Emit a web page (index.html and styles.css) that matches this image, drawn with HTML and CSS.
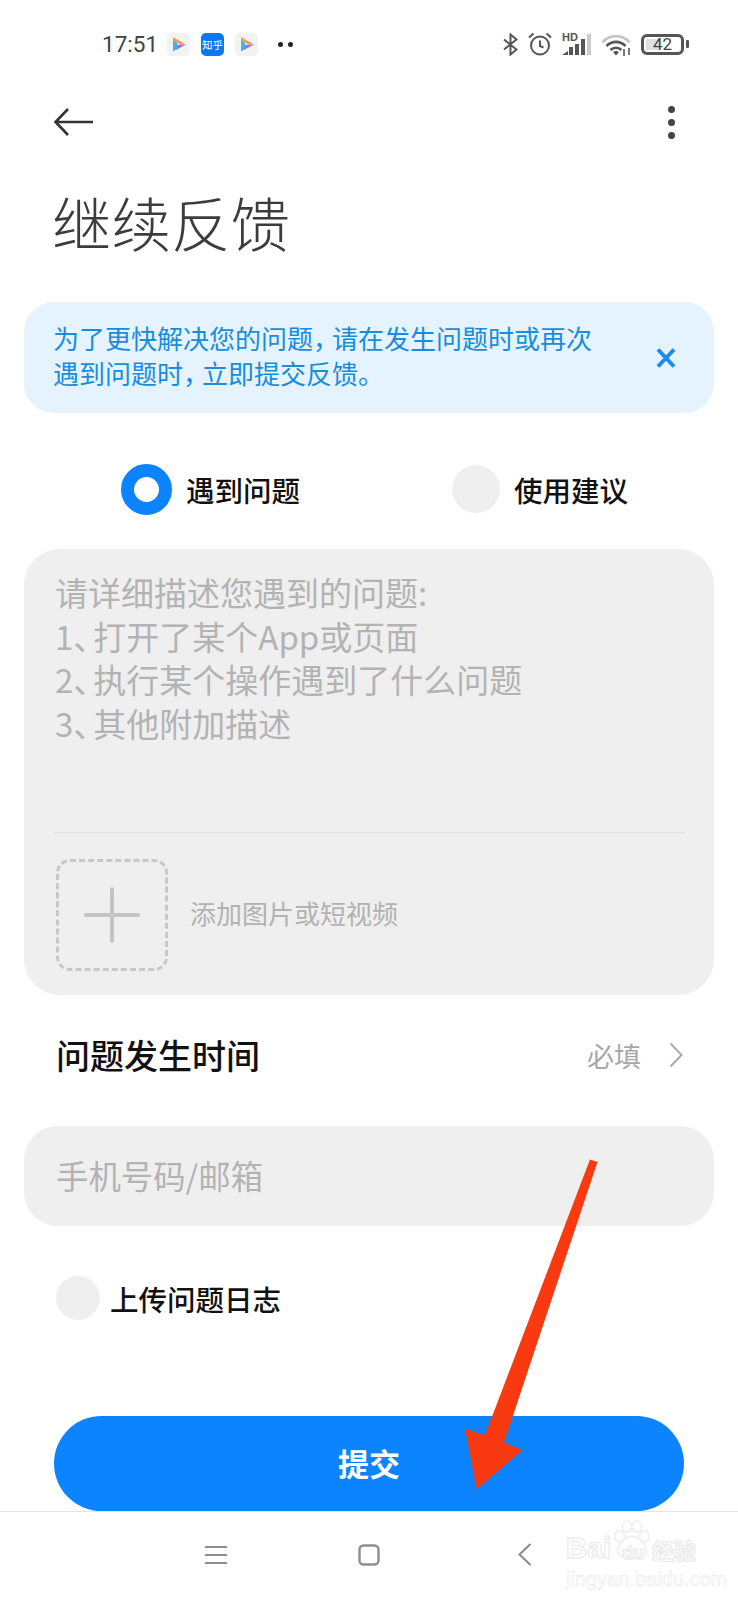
FILE: index.html
```html
<!DOCTYPE html>
<html lang="zh">
<head>
<meta charset="utf-8">
<title>继续反馈</title>
<link rel="stylesheet" href="styles.css">
</head>
<body>

<div id="page">
  <div class="status">
    <span class="time">17:51</span>
    <svg class="app" width="23" height="23" viewBox="0 0 23 23">
      <rect width="23" height="23" rx="5" fill="#f3f3f3"/>
      <path d="M6 4L19 11.5L13 11.5L6 7Z" fill="#f0a040"/>
      <path d="M19 11.5L9 17L10 12Z" fill="#a56be8"/>
      <path d="M6 7L10 9.5L10 16L6 18.5Z" fill="#3fb4ea"/>
    </svg>
    <span class="zhihu">知乎</span>
    <svg class="app" width="23" height="23" viewBox="0 0 23 23">
      <rect width="23" height="23" rx="5" fill="#f3f3f3"/>
      <path d="M6 4L19 11.5L13 11.5L6 7Z" fill="#f0a040"/>
      <path d="M19 11.5L9 17L10 12Z" fill="#a56be8"/>
      <path d="M6 7L10 9.5L10 16L6 18.5Z" fill="#3fb4ea"/>
    </svg>
    <span class="dots"><i></i><i></i></span>

    <span class="status-right">
      <svg width="15" height="23" viewBox="0 0 15 23" fill="none" stroke="#555" stroke-width="2">
        <path d="M1 6.5L13.5 16.5L7.5 21.5V1.5L13.5 6.5L1 16.5"/>
      </svg>
      <svg width="24" height="24" viewBox="0 0 24 24" fill="none" stroke="#555" stroke-width="2">
        <circle cx="12" cy="13.5" r="9"/>
        <path d="M12 8.5V14L15.5 15.5M1 5.5L5.5 1.5M23 5.5L18.5 1.5"/>
      </svg>
      <span class="signal">
        <b>HD</b>
        <svg width="29" height="21" viewBox="0 0 29 21">
          <path d="M0 21L6 17V21Z" fill="#555"/>
          <rect x="7" y="13" width="4" height="8" fill="#555"/>
          <rect x="13" y="10" width="4" height="11" fill="#555"/>
          <rect x="19" y="5" width="4" height="16" fill="#555"/>
          <rect x="25" y="0" width="4" height="21" fill="#ccc"/>
        </svg>
      </span>
      <svg width="30" height="23" viewBox="0 0 30 23" fill="none">
        <path d="M1.5 9.5C8.5 1 21.5 1 28.5 9.5" stroke="#c4c4c4" stroke-width="2.6"/>
        <path d="M5.5 13C11 7.5 19 7.5 24.5 13" stroke="#555" stroke-width="2.6"/>
        <path d="M9.5 17C12.5 14 17.5 14 20.5 17" stroke="#555" stroke-width="2.6"/>
        <path d="M12 19L15 22.5L18 19C16 17.8 14 17.8 12 19Z" fill="#555"/>
        <path d="M23 16V23M28 15V22" stroke="#555" stroke-width="1.6"/>
      </svg>
      <span class="battery"><span class="battery-fill"></span><span class="battery-num">42</span></span>
    </span>
  </div>

  <div class="topbar">
    <svg width="42" height="30" viewBox="0 0 42 30" fill="none" stroke="#333" stroke-width="2.6">
      <path d="M15 2L2.5 15L15 28M2.5 15H40"/>
    </svg>
    <span class="more"><i></i><i></i><i></i></span>
  </div>

  <h1 class="title">继续反馈</h1>

  <div class="notice">
    <p class="notice-text">为了更快解决您的问题<span class="comma">，</span>请在发生问题时或再次<br>遇到问题时<span class="comma">，</span>立即提交反馈。</p>
    <svg width="20" height="20" viewBox="0 0 20 20" fill="none" stroke="#1a8cf0" stroke-width="4">
      <path d="M2 1.5L18 18.5M18 1.5L2 18.5"/>
    </svg>
  </div>

  <div class="types">
    <span class="type type-first"><span class="radio radio-on"></span>遇到问题</span>
    <span class="type"><span class="radio"></span>使用建议</span>
  </div>

  <div class="panel">
    <p class="placeholder">请详细描述您遇到的问题:<br>1<span class="dun">、</span>打开了某个App或页面<br>2<span class="dun">、</span>执行某个操作遇到了什么问题<br>3<span class="dun">、</span>其他附加描述</p>
    <div class="divider"></div>
    <div class="attach">
      <span class="add-box">
        <svg width="56" height="56" viewBox="0 0 56 56" stroke="#c4c4c4" stroke-width="4" stroke-linecap="round">
          <path d="M28 2V54M2 28H54"/>
        </svg>
      </span>
      <span class="attach-text">添加图片或短视频</span>
    </div>
  </div>

  <div class="time-row">
    <span class="time-label">问题发生时间</span>
    <span class="required">必填</span>
    <svg width="14" height="26" viewBox="0 0 14 26" fill="none" stroke="#aaa" stroke-width="2">
      <path d="M1.5 1.5L12.5 13L1.5 24.5"/>
    </svg>
  </div>

  <div class="contact">手机号码/邮箱</div>

  <div class="log-row"><span class="radio radio-small"></span>上传问题日志</div>

  <div class="submit">提交</div>

  <div class="navbar">
    <svg width="22" height="20" viewBox="0 0 22 20" stroke="#8e8e8e" stroke-width="2">
      <path d="M0 2H22M0 10H22M0 18H22"/>
    </svg>
    <svg width="22" height="22" viewBox="0 0 22 22" fill="none" stroke="#8e8e8e" stroke-width="2.4">
      <rect x="1.5" y="1.5" width="19" height="19" rx="4"/>
    </svg>
    <svg class="nav-back" width="14" height="23" viewBox="0 0 14 23" fill="none" stroke="#8e8e8e" stroke-width="2.2">
      <path d="M12.5 1L1.5 11.5L12.5 22"/>
    </svg>
  </div>

  <!-- marks that lie over the page -->
  <svg class="red-arrow" width="738" height="1600" viewBox="0 0 738 1600">
    <path d="M590 1159.5L597.5 1162L504 1442.7L522.7 1450L476.7 1489.5L465 1428.7L485 1435Z" fill="#f93a10"/>
  </svg>

  <div class="watermark">
    <svg class="paw" width="40" height="42" viewBox="0 0 42 42" fill="none" stroke="#ececec" stroke-width="1.4">
      <ellipse cx="8" cy="17" rx="5" ry="6"/>
      <ellipse cx="16" cy="7" rx="5" ry="6"/>
      <ellipse cx="26" cy="7" rx="5" ry="6"/>
      <ellipse cx="34" cy="17" rx="5" ry="6"/>
      <path d="M21 17C14 17 8 25 6 31C5 37 11 40 21 40C31 40 37 37 36 31C34 25 28 17 21 17Z"/>
    </svg>
    <span class="wm-bai">Bai</span><span class="wm-du">du</span><span class="wm-cn">经验</span>
    <span class="wm-url">jingyan.baidu.com</span>
  </div>
</div>

</body>
</html>
```

FILE: styles.css
```css
* {
  box-sizing: border-box;
}

body {
  margin: 0;
  background: #fff;
  font-family: "Noto Sans CJK SC", "Noto Sans", sans-serif;
}

#page {
  position: relative;
  width: 738px;
  height: 1600px;
  overflow: hidden;
  background: #fff;
}

/* status bar */
.status {
  display: flex;
  align-items: center;
  height: 88px;
  padding-left: 102px;
  padding-right: 54px;
}

.time {
  width: 65px;
  font-family: Roboto, sans-serif;
  font-size: 22.5px;
  color: #444;
}

.zhihu {
  display: flex;
  align-items: center;
  justify-content: center;
  width: 23px;
  height: 23px;
  margin: 0 11px 0 11px;
  border-radius: 5px;
  background: #0a78f0;
  color: #fff;
  font-size: 10.5px;
  white-space: nowrap;
}

.dots {
  display: flex;
  gap: 5px;
  margin-left: 20px;
}

.dots i {
  width: 5px;
  height: 5px;
  border-radius: 50%;
  background: #222;
}

.status-right {
  display: flex;
  align-items: center;
  gap: 10px;
  margin-left: auto;
}

.signal {
  position: relative;
  display: block;
  width: 29px;
  height: 21px;
}

.signal b {
  position: absolute;
  left: 0;
  top: -2px;
  font-family: "Liberation Sans", sans-serif;
  font-size: 11px;
  line-height: 11px;
  color: #555;
}

.signal svg {
  display: block;
}

.battery {
  position: relative;
  display: flex;
  align-items: center;
  justify-content: center;
  width: 43px;
  height: 21px;
  border: 3px solid #555;
  border-radius: 6px;
}

.battery::after {
  content: "";
  position: absolute;
  right: -8px;
  top: 3px;
  width: 3px;
  height: 8px;
  border-radius: 1px;
  background: #555;
}

.battery-fill {
  position: absolute;
  left: 2px;
  top: 2px;
  bottom: 2px;
  width: 13px;
  background: #e0e0e0;
}

.battery-num {
  position: relative;
  font-family: Roboto, sans-serif;
  font-size: 17px;
  color: #444;
}

/* top bar */
.topbar {
  display: flex;
  align-items: center;
  justify-content: space-between;
  height: 68px;
  padding: 0 63px 0 53px;
}

.more {
  display: flex;
  flex-direction: column;
  gap: 6px;
}

.more i {
  width: 7px;
  height: 7px;
  border-radius: 50%;
  background: #444;
}

.title {
  margin: 27px 0 0 52px;
  font-size: 59.5px;
  line-height: 76px;
  font-weight: 300;
  color: #3c3c3c;
}

/* notice */
.notice {
  display: flex;
  align-items: center;
  justify-content: space-between;
  height: 111px;
  margin: 43px 24px 0;
  padding: 0 38px 0 29px;
  border-radius: 30px;
  background: #e4f3fd;
}

.notice-text {
  margin: 0 0 5px;
  font-size: 26px;
  line-height: 35px;
  color: #1a8cdc;
}

.comma {
  letter-spacing: -7px;
}

/* type radios */
.types {
  display: flex;
  align-items: center;
  height: 50px;
  margin-top: 51px;
  padding-left: 121px;
}

.type {
  display: flex;
  align-items: center;
  gap: 14px;
  font-size: 28.5px;
  font-weight: 500;
  color: #111;
}

.type-first {
  width: 331px;
}

.radio {
  display: block;
  flex: none;
  width: 48px;
  height: 48px;
  border-radius: 50%;
  background: #efefef;
}

.radio-on {
  width: 51px;
  height: 51px;
  border: 13px solid #0d84ff;
  background: #fff;
}

.radio-small {
  width: 44px;
  height: 44px;
}

/* description panel */
.panel {
  height: 446px;
  margin: 35px 24px 0;
  padding: 26px 27px 0 31px;
  border-radius: 36px;
  background: #efefef;
}

.placeholder {
  height: 257px;
  margin: -4px 0 0;
  font-size: 33px;
  line-height: 43.6px;
  color: #b3b3b3;
}

.dun {
  letter-spacing: -13px;
}

.divider {
  height: 1px;
  margin-top: 4px;
  margin-left: -1px;
  margin-right: 2px;
  background: #e0e0e0;
}

.attach {
  display: flex;
  align-items: center;
  gap: 22px;
  margin-top: 26px;
  margin-left: 1px;
}

.add-box {
  display: flex;
  align-items: center;
  justify-content: center;
  width: 112px;
  height: 112px;
  border: 3px dashed #c8c8c8;
  border-radius: 14px;
}

.attach-text {
  padding-bottom: 6px;
  font-size: 26px;
  color: #b2b2b2;
}

/* time row */
.time-row {
  display: flex;
  align-items: center;
  height: 60px;
  margin-top: 30px;
  padding: 0 55px 0 56px;
}

.time-label {
  flex: 1;
  padding-bottom: 2px;
  font-size: 34px;
  font-weight: 500;
  color: #111;
}

.required {
  margin-right: 28px;
  font-size: 27px;
  color: #a8a8a8;
}

/* contact */
.contact {
  display: flex;
  align-items: center;
  height: 100px;
  margin: 41px 24px 0;
  padding: 0 0 4px 32px;
  border-radius: 34px;
  background: #efefef;
  font-size: 32.4px;
  color: #b3b3b3;
}

.log-row {
  display: flex;
  align-items: center;
  gap: 10px;
  height: 44px;
  margin-top: 50px;
  padding-left: 56px;
  font-size: 28.5px;
  font-weight: 500;
  color: #111;
}

/* submit */
.submit {
  display: flex;
  align-items: center;
  justify-content: center;
  height: 95px;
  margin: 96px 54px 0;
  padding-bottom: 2px;
  border-radius: 48px;
  background: #0d84ff;
  color: #fff;
  font-size: 31px;
  font-weight: 700;
}

/* nav bar */
.navbar {
  display: flex;
  align-items: center;
  gap: 131px;
  height: 88px;
  padding: 0 0 2px 205px;
  border-top: 1px solid #e4e4e4;
}

.navbar svg {
  flex: none;
}

.nav-back {
  margin-left: 7px;
}

.red-arrow {
  position: absolute;
  left: 0;
  top: 0;
}

/* baidu watermark */
.watermark {
  position: absolute;
  left: 566px;
  top: 1519px;
  width: 140px;
  height: 72px;
}

.paw {
  position: absolute;
  left: 46px;
  top: 0;
}

.wm-bai,
.wm-du,
.wm-cn,
.wm-url {
  position: absolute;
  font-family: "Liberation Sans", sans-serif;
  color: #fff;
  -webkit-text-stroke: 1px #e8e8e8;
  line-height: 1;
}

.wm-bai {
  left: 0;
  top: 15px;
  font-size: 29px;
  font-weight: 700;
}

.wm-du {
  left: 56px;
  top: 25px;
  font-size: 18px;
  font-weight: 700;
}

.wm-cn {
  left: 86px;
  top: 19px;
  font-family: "Noto Sans CJK SC", sans-serif;
  font-size: 22px;
  font-weight: 700;
}

.wm-url {
  left: 0;
  top: 50px;
  font-size: 20px;
  -webkit-text-stroke: 0.5px #e8e8e8;
}
```
